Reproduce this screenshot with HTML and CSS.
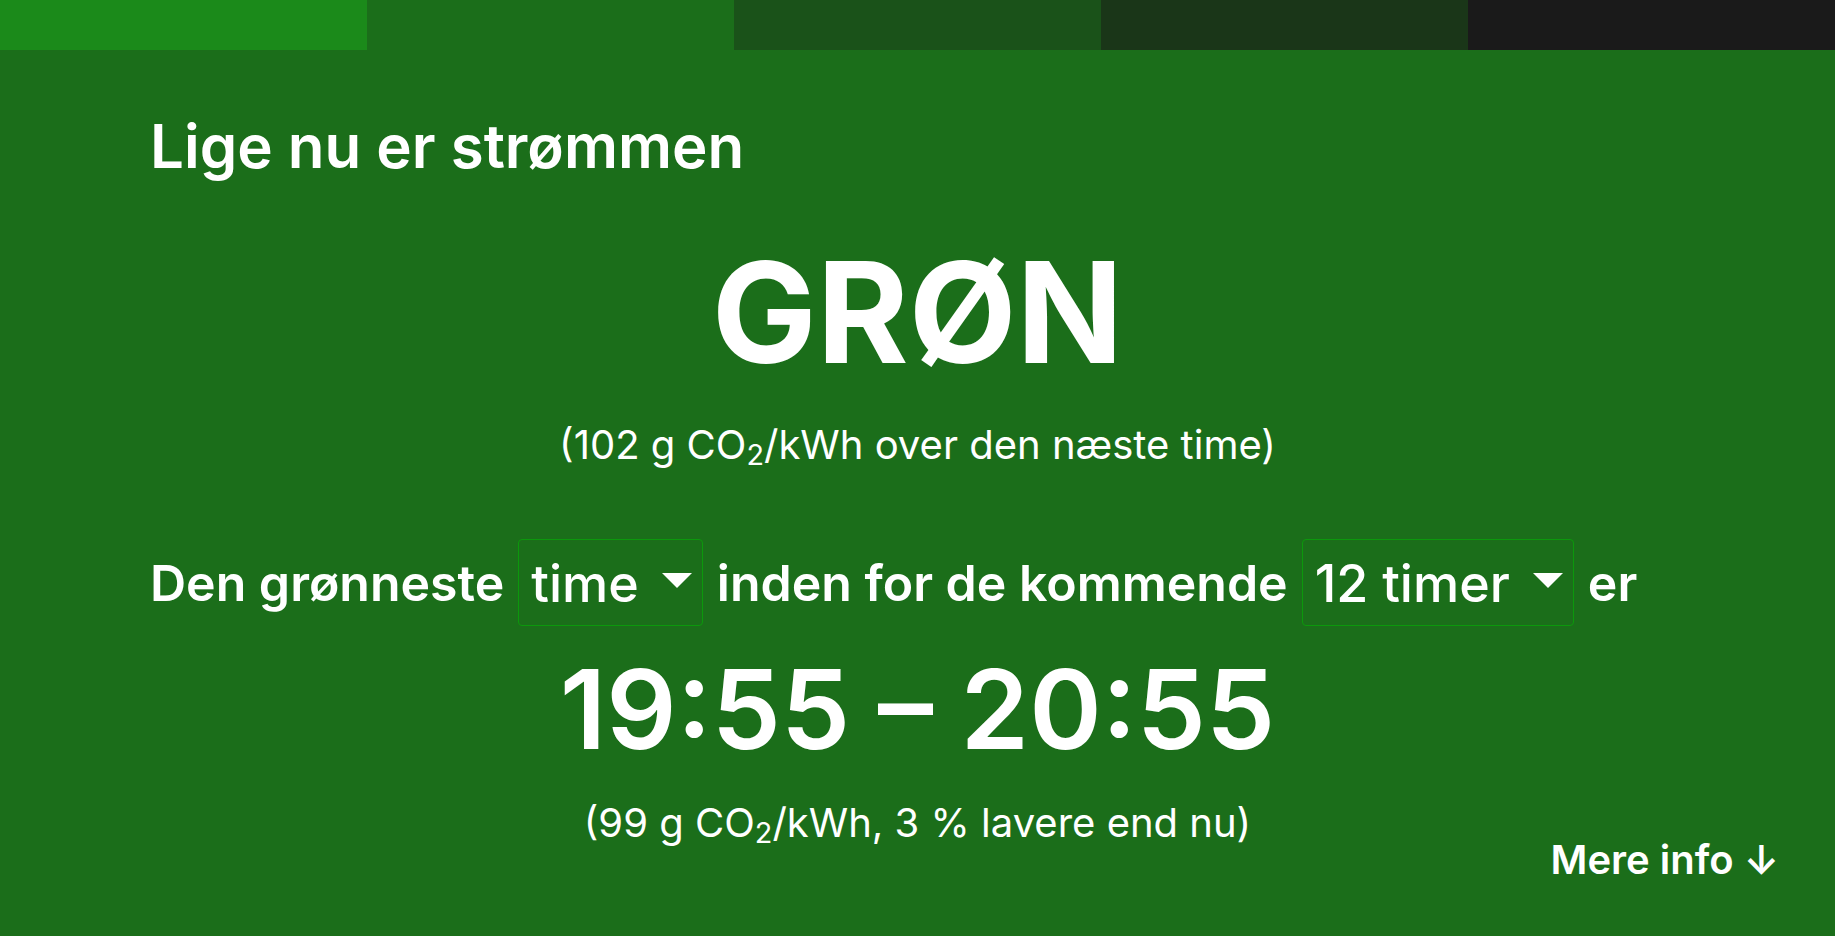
FILE: index.html
```html
<!DOCTYPE html>
<html lang="da">
<head>
<meta charset="utf-8">
<title>Strømmen</title>
<link rel="stylesheet" href="styles.css">
</head>
<body>
<div class="page">
  <div class="scale">
    <div class="seg seg-1"></div>
    <div class="seg seg-2"></div>
    <div class="seg seg-3"></div>
    <div class="seg seg-4"></div>
    <div class="seg seg-5"></div>
  </div>
  <main class="content">
    <h1 class="title">Lige nu er strømmen</h1>
    <div class="status">GRØN</div>
    <p class="note note-1">(102 g CO<sub>2</sub>/kWh over den næste time)</p>
    <div class="query">
      <span class="word">Den grønneste</span>
      <div class="pick">
        <span class="pick-text">time</span>
        <svg class="caret" width="30" height="15" viewBox="0 0 30 15"><polygon points="0,0 30,0 15,15" fill="#fff"/></svg>
      </div>
      <span class="word">inden for de kommende</span>
      <div class="pick">
        <span class="pick-text">12 timer</span>
        <svg class="caret" width="30" height="15" viewBox="0 0 30 15"><polygon points="0,0 30,0 15,15" fill="#fff"/></svg>
      </div>
      <span class="word">er</span>
    </div>
    <div class="time">19:55 – 20:55</div>
    <p class="note note-2">(99 g CO<sub>2</sub>/kWh, 3 % lavere end nu)</p>
    <div class="more-row"><a class="more" href="#">Mere info ↓</a></div>
  </main>
</div>
</body>
</html>
```
FILE: styles.css
```css
html, body {
  margin: 0;
  padding: 0;
}
body {
  background: #1b6e1a;
  color: #fff;
  font-family: Inter, "Noto Sans", "Liberation Sans", sans-serif;
}
.page {
  height: 936px;
  overflow: hidden;
  display: flex;
  flex-direction: column;
}
.scale {
  display: grid;
  grid-template-columns: repeat(5, 1fr);
  height: 50px;
}
.seg-1 { background: #1b8a1a; }
.seg-2 { background: #1b6e1a; }
.seg-3 { background: #1a5219; }
.seg-4 { background: #1a3618; }
.seg-5 { background: #1a1a1a; }

.content {
  display: flex;
  flex-direction: column;
  padding: 0 56px 0 150px;
}
.title {
  margin: 66px 0 0;
  font-size: 60px;
  line-height: 1;
  font-weight: 600;
}
.status {
  margin: 66px 0 0;
  font-size: 140px;
  line-height: 1;
  font-weight: 700;
  text-align: center;
  padding-right: 94px;
}
.note {
  margin: 0;
  font-size: 40px;
  line-height: 1;
  font-weight: 400;
  text-align: center;
  padding-right: 94px;
}
.note sub {
  font-size: 0.72em;
  vertical-align: -0.2em;
  line-height: 0;
}
.note-1 { margin-top: 43px; }
.query {
  margin-top: 74px;
  display: flex;
  align-items: center;
  gap: 14px;
  height: 87px;
}
.word {
  font-size: 50px;
  line-height: 1;
  font-weight: 600;
}
.pick {
  box-sizing: border-box;
  height: 87px;
  display: flex;
  align-items: center;
  border: 1px solid #0c980c;
  border-radius: 4px;
  padding: 0 10px 0 12px;
  gap: 23px;
}
.pick-text {
  font-size: 52px;
  line-height: 1;
  font-weight: 500;
  margin-top: 3px;
}
.caret {
  display: block;
  margin-top: -4px;
}
.time {
  margin-top: 28px;
  font-size: 110px;
  line-height: 1;
  font-weight: 600;
  text-align: center;
  padding-right: 94px;
}
.note-2 { margin-top: 39px; }
.more-row {
  display: flex;
  justify-content: flex-end;
  margin-top: -3px;
}
.more {
  color: #fff;
  text-decoration: none;
  font-size: 40px;
  line-height: 1;
  font-weight: 600;
}
```
